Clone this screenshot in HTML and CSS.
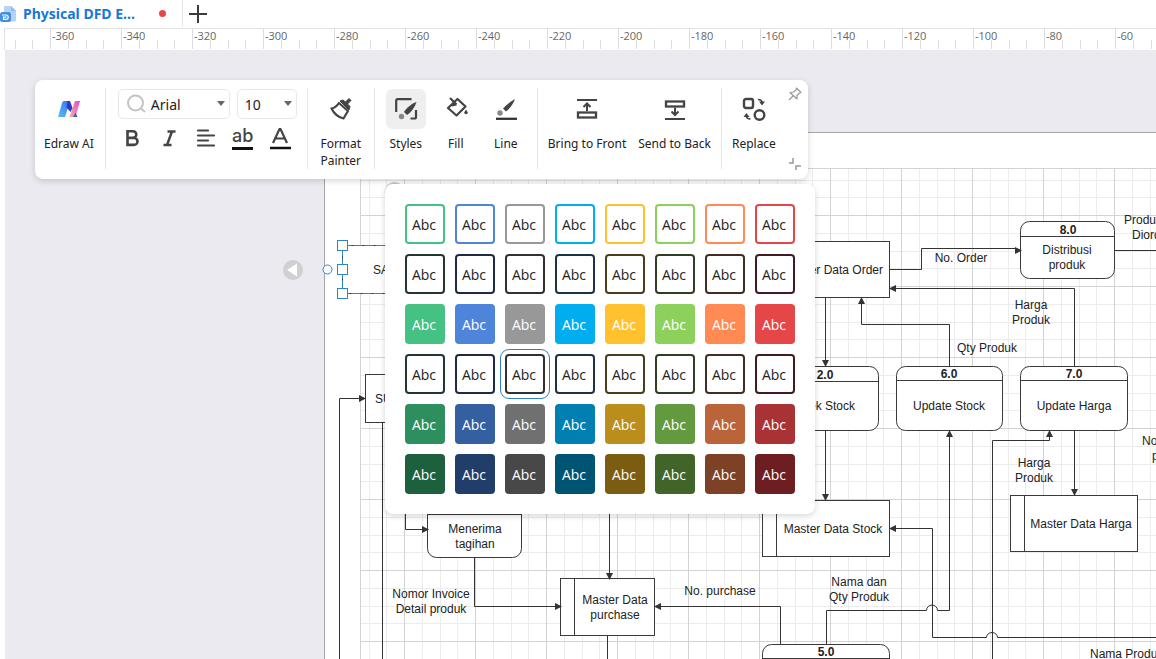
FILE: index.html
```html
<!DOCTYPE html>
<html lang="en">
<head>
<meta charset="utf-8">
<meta name="viewport" content="width=device-width, initial-scale=1">
<title>Physical DFD</title>
<link rel="stylesheet" href="styles.css">
</head>
<body>
<div class="app">
  <header class="tabs">
    <button class="tab" type="button">
      <svg class="tab-icon" width="16" height="18" viewBox="0 0 16 18" aria-hidden="true">
        <path d="M4 1h7l5 5v9a1.500 1.500 0 0 1-1.500 1.500H4z" fill="#b5d3f8"/>
        <path d="M11 1l5 5h-5z" fill="#8fbcf2"/>
        <rect x="0" y="7" width="11" height="10" rx="2.500" fill="#3f8fe6"/>
        <path d="M2 10h4a2.200 2.200 0 0 1 0 4.400H3.500v-2.200h3" fill="none" stroke="#fff" stroke-width="1.200"/>
      </svg>
      <span class="tab-title">Physical DFD E...</span>
      <span class="unsaved"></span>
    </button>
    <button class="add-tab" type="button" aria-label="New tab">
      <svg width="18" height="18" viewBox="0 0 18 18"><path d="M9 0v18M0 9h18" stroke="#3a3a3a" stroke-width="2"/></svg>
    </button>
  </header>

  <div class="ruler">
    <span class="mark">-360</span><span class="mark">-340</span><span class="mark">-320</span><span class="mark">-300</span>
    <span class="mark">-280</span><span class="mark">-260</span><span class="mark">-240</span><span class="mark">-220</span>
    <span class="mark">-200</span><span class="mark">-180</span><span class="mark">-160</span><span class="mark">-140</span>
    <span class="mark">-120</span><span class="mark">-100</span><span class="mark">-80</span><span class="mark">-60</span>
  </div>

  <main class="workspace">
    <svg class="diagram" width="100%" height="100%" aria-label="Data flow diagram">
      <defs>
        <pattern id="grid" x="49" y="2" width="71" height="71" patternUnits="userSpaceOnUse">
          <path d="M18.500 0v71M36.500 0v71M53.500 0v71M0 18.500h71M0 36.500h71M0 53.500h71" stroke="#ececec" fill="none"/>
          <path d="M.5 0v71M0 .5h71" stroke="#d3d3d3" fill="none"/>
        </pattern>
        <marker id="arrow" viewBox="0 0 7 8" refX="6" refY="4" markerWidth="7" markerHeight="8" markerUnits="userSpaceOnUse" orient="auto">
          <path d="M0 0.500L7 4L0 7.500z" fill="#333"/>
        </marker>
      </defs>
      <g transform="translate(-5 -50)">
        <rect class="page" x="324.500" y="132.500" width="2000" height="2000"/>
        <svg x="360" y="168" width="2000" height="2000" viewBox="360 168 2000 2000">
          <rect x="360" y="168" width="2000" height="2000" fill="url(#grid)"/>
          <path d="M360.500 168v2000M360 168.500h2000" stroke="#d3d3d3"/>
        </svg>
        <circle class="rotate" cx="394.500" cy="192" r="9"/>

        <g class="shape">
          <rect x="342.500" y="245.500" width="106" height="48"/>
          <rect x="365.500" y="374.500" width="80" height="48"/>
          <rect x="427.500" y="490.500" width="94" height="67" rx="9"/>
          <path d="M427 514.500h94"/>
          <rect x="560.500" y="578.500" width="94" height="57"/>
          <path d="M574.500 578v57"/>
          <rect x="762.500" y="644.500" width="127" height="64" rx="9"/>
          <path d="M762 658.500h127"/>
          <rect x="762.500" y="500.500" width="127" height="56"/>
          <path d="M776.500 500v56"/>
          <rect x="762.500" y="241.500" width="127" height="56"/>
          <rect x="772.500" y="366.500" width="106" height="64" rx="9"/>
          <path d="M772 381.500h106"/>
          <rect x="896.500" y="366.500" width="106" height="64" rx="9"/>
          <path d="M896 380.500h106"/>
          <rect x="1020.500" y="366.500" width="107" height="64" rx="9"/>
          <path d="M1020 380.500h107"/>
          <rect x="1020.500" y="221.500" width="94" height="57" rx="9"/>
          <path d="M1020 236.500h94"/>
          <rect x="1010.500" y="495.500" width="127" height="56"/>
          <path d="M1024.500 495v56"/>
        </g>

        <g class="link">
          <path d="M382.500 423v400"/>
          <path d="M607.500 636v200"/>
          <path d="M1115 250.500h400"/>
          <path d="M932.500 610v27.500h54a5.500 5 0 0 1 11 0h600"/>
        </g>
        <g class="link arrowed">
          <path d="M339.500 823V398.500H365"/>
          <path d="M405.500 500v29.500H428"/>
          <path d="M474.500 558v48.500H561"/>
          <path d="M609.500 500v79"/>
          <path d="M780.500 644v-37.500H655"/>
          <path d="M825.500 298v68"/>
          <path d="M825.500 431v69"/>
          <path d="M890 269.500h31.500v-21H1016.500V250.500H1021"/>
          <path d="M1074.500 366v-77.500H890"/>
          <path d="M949.500 366v-41.500h-88V298"/>
          <path d="M826.500 644v-33.500h100a5.500 5.500 0 0 1 11 0h12V431"/>
          <path d="M932.500 610v-81.500H890"/>
          <path d="M992.500 823V440.500h57V431"/>
          <path d="M1074.500 431v64"/>
        </g>

        <g class="label">
          <text x="373" y="274">SALES</text>
          <text x="375" y="403">SUPPLIER</text>
          <text x="1124" y="224">Produk</text>
          <text x="1132" y="239">Diorder</text>
          <text x="1142" y="445">Nota</text>
          <text x="1152" y="460">produk</text>
          <text x="1090" y="658">Nama Produk</text>
        </g>
        <g class="label end">
          <text x="883" y="274">Master Data Order</text>
          <text x="855" y="410">Cek Stock</text>
        </g>
        <g class="label middle">
          <text x="475" y="533">Menerima</text>
          <text x="475" y="548">tagihan</text>
          <text x="431" y="598">Nomor Invoice</text>
          <text x="431" y="613">Detail produk</text>
          <text x="615" y="604">Master Data</text>
          <text x="615" y="619">purchase</text>
          <text x="720" y="595">No. purchase</text>
          <text x="833" y="533">Master Data Stock</text>
          <text x="859" y="586">Nama dan</text>
          <text x="859" y="601">Qty Produk</text>
          <text x="961" y="262">No. Order</text>
          <text x="1031" y="309">Harga</text>
          <text x="1031" y="324">Produk</text>
          <text x="987" y="352">Qty Produk</text>
          <text x="1067" y="254">Distribusi</text>
          <text x="1067" y="269">produk</text>
          <text x="949" y="410">Update Stock</text>
          <text x="1074" y="410">Update Harga</text>
          <text x="1034" y="467">Harga</text>
          <text x="1034" y="482">Produk</text>
          <text x="1081" y="528">Master Data Harga</text>
        </g>
        <g class="label middle number">
          <text x="1068" y="234">8.0</text>
          <text x="825" y="379">2.0</text>
          <text x="949" y="378">6.0</text>
          <text x="1074" y="378">7.0</text>
          <text x="826" y="656">5.0</text>
        </g>

        <g class="selection">
          <rect class="outline" x="342.500" y="245.500" width="106" height="48"/>
          <rect x="337.500" y="240.500" width="10" height="10"/>
          <rect x="337.500" y="264.500" width="10" height="10"/>
          <rect x="337.500" y="288.500" width="10" height="10"/>
          <circle cx="327.500" cy="269.500" r="4.500"/>
        </g>
        <circle cx="293" cy="270" r="10" fill="#d0d0d0"/>
        <path d="M287 270l10-6.500v13z" fill="#fff"/>
      </g>
    </svg>
  </main>

  <section class="toolbar" aria-label="Format toolbar">
    <div class="group ai">
      <button class="tool" type="button">
        <span class="tool-icon">
          <svg width="24" height="18" viewBox="0 0 24 18">
            <defs>
              <linearGradient id="blue" x1="0" y1="1" x2="1" y2="0"><stop offset="0" stop-color="#56c1f5"/><stop offset="1" stop-color="#3e6df0"/></linearGradient>
              <linearGradient id="pink" x1="0" y1="1" x2="1" y2="0"><stop offset="0" stop-color="#ffa9a8"/><stop offset="1" stop-color="#e64bc8"/></linearGradient>
            </defs>
            <path d="M7 1h6l-5 16H1L5 3q.6-2 2-2z" fill="url(#blue)"/>
            <path d="M18 1h5l-4.500 16h-6z" fill="url(#pink)"/>
            <path d="M10.500 1h2.500l2.500 7-2 4-4-4.500z" fill="#2b3bc4"/>
            <path d="M18.500 12.500l2 4.500h-4.500z" fill="#3f62b8"/>
          </svg>
        </span>
        <span>Edraw AI</span>
      </button>
    </div>

    <div class="group text-group">
      <div class="row fields">
        <label class="field font-field">
          <svg width="20" height="20" viewBox="0 0 20 20" aria-hidden="true"><circle cx="9.500" cy="9" r="7.500" fill="none" stroke="#c4c4c4" stroke-width="2"/><path d="M15 14.500l4 3.500" stroke="#c4c4c4" stroke-width="2"/></svg>
          <select aria-label="Font"><option>Arial</option></select>
          <span class="caret"></span>
        </label>
        <label class="field size-field">
          <select aria-label="Font size"><option>10</option></select>
          <span class="caret"></span>
        </label>
      </div>
      <div class="row styles-row">
        <button class="mini" type="button" aria-label="Bold"><svg width="24" height="24" viewBox="0 0 24 24" fill="none" stroke="#444" stroke-width="2.600"><path d="M7.500 5.300h5.500a3.300 3.300 0 0 1 0 6.600H7.500zM7.500 11.900h6.500a3.500 3.500 0 0 1 0 7H7.500z"/></svg></button>
        <button class="mini" type="button" aria-label="Italic"><svg width="24" height="24" viewBox="0 0 24 24" fill="none" stroke="#444" stroke-width="2.400"><path d="M10.500 5.500h8M6.500 19h8M15 5.500L10 19"/></svg></button>
        <button class="mini" type="button" aria-label="Align"><svg width="24" height="24" viewBox="0 0 24 24" stroke="#444" stroke-width="2.200" stroke-linecap="round"><path d="M4 4.500h10M4 9.500h16M4 14.500h10M4 19.500h16"/></svg></button>
        <button class="mini" type="button" aria-label="Highlight"><span class="glyph">ab</span></button>
        <button class="mini" type="button" aria-label="Font color"><svg width="24" height="24" viewBox="0 0 24 24" fill="none" stroke="#444" stroke-width="2.200"><path d="M5 17L11.500 3h1L19 17M7.500 12.500h9"/><path d="M2 22h21" stroke="#111" stroke-width="2.500"/></svg></button>
      </div>
    </div>

    <div class="group painter">
      <button class="tool" type="button">
        <span class="tool-icon">
          <svg width="24" height="24" viewBox="0 0 24 24" fill="none" stroke="#444" stroke-width="2.200" stroke-linejoin="round">
            <path d="M2.500 11.500Q7 10.500 10 6l9 8q-2.500 4-4.500 7.500Q6.500 19.500 2.500 11.500z"/>
            <path d="M11 4l9 9 1-3.500-2.500-2.500 3.500-3.500-2-2-3.500 3.500-2.500-2z" fill="#444" stroke-width="1"/>
          </svg>
        </span>
        <span>Format Painter</span>
      </button>
    </div>

    <div class="group paint-group">
      <button class="tool active" type="button" aria-pressed="true">
        <span class="tool-icon">
          <svg width="24" height="24" viewBox="0 0 24 24" fill="none" stroke="#444" stroke-width="2.200">
            <path d="M17.500 2.200H3.500a1.300 1.300 0 0 0-1.300 1.300v11.500M22 13v7a1.500 1.500 0 0 1-1.500 1.500H16.500"/>
            <path d="M22.500 5c-1.500 5-5 10-9.500 13l-3-3c3-4.500 7.500-8.500 12.500-10z" fill="#444" stroke="none"/>
            <circle cx="7.500" cy="19.500" r="2.700" fill="#888" stroke="none"/>
          </svg>
        </span>
        <span>Styles</span>
      </button>
      <button class="tool" type="button">
        <span class="tool-icon">
          <svg width="24" height="24" viewBox="0 0 24 24" fill="none" stroke="#444" stroke-width="2.200" stroke-linejoin="round">
            <path d="M13.500 2L21.500 9.500 12.500 18.500 4 11z"/>
            <path d="M6 1l6.500 6.500M7.500 8.500l5-1"/>
            <path d="M22 12.500l1.800 3a1.800 1.800 0 1 1-3.600 0z" fill="#444" stroke="none"/>
          </svg>
        </span>
        <span>Fill</span>
      </button>
      <button class="tool" type="button">
        <span class="tool-icon">
          <svg width="24" height="24" viewBox="0 0 24 24">
            <path d="M21 2c-1.500 4.500-4.500 9-9 12.500l-3-3C12.500 7.500 16.500 4.500 21 2z" fill="#444"/>
            <circle cx="6" cy="16" r="2.700" fill="#888"/>
            <path d="M2 21.800h21" stroke="#333" stroke-width="2.300"/>
          </svg>
        </span>
        <span>Line</span>
      </button>
    </div>

    <div class="group layer-group">
      <button class="tool" type="button">
        <span class="tool-icon">
          <svg width="24" height="24" viewBox="0 0 24 24" fill="none" stroke="#444" stroke-width="2">
            <path d="M2 3h20M12 14V7M8.500 10L12 6.500l3.500 3.500"/><rect x="3" y="15.500" width="18" height="5" stroke-width="2.300"/>
          </svg>
        </span>
        <span>Bring to Front</span>
      </button>
      <button class="tool" type="button">
        <span class="tool-icon">
          <svg width="24" height="24" viewBox="0 0 24 24" fill="none" stroke="#444" stroke-width="2">
            <path d="M2 22h20M12 10.500v7M8.500 14.500L12 18l3.500-3.500"/><rect x="3" y="4.500" width="18" height="5" stroke-width="2.300"/>
          </svg>
        </span>
        <span>Send to Back</span>
      </button>
    </div>

    <div class="group replace-group">
      <button class="tool" type="button">
        <span class="tool-icon">
          <svg width="24" height="24" viewBox="0 0 24 24" fill="none" stroke="#444" stroke-width="2.400">
            <rect x="2" y="2" width="9" height="9" rx="2"/>
            <circle cx="17.500" cy="18" r="4.800"/>
            <path d="M16 2.500c3 0 4 1 4 3M8.500 22c-3 0-4-1-4-3" stroke-width="1.600"/>
            <path d="M17 4.500h6L20 8.500zM1.500 20h6L4.500 16z" fill="#444" stroke="none"/>
          </svg>
        </span>
        <span>Replace</span>
      </button>
      <div class="corner">
        <button class="corner-btn" type="button" aria-label="Pin"><svg width="14" height="14" viewBox="0 0 14 14" fill="none" stroke="#999" stroke-width="1.200" stroke-linejoin="round"><path d="M8.500 1L13 5.500l-1.500.500-2.500 2.500V12L2 5.500 5.500 5 8 3zM5 9L1 13"/></svg></button>
        <button class="corner-btn" type="button" aria-label="Collapse"><svg width="14" height="14" viewBox="0 0 14 14" fill="none" stroke="#999" stroke-width="1.500"><path d="M1 6h4V1M8 13V9h5"/></svg></button>
      </div>
    </div>
  </section>

  <section class="palette" aria-label="Quick styles">
    <div class="swatches outline-light">
      <button class="swatch green">Abc</button><button class="swatch blue">Abc</button><button class="swatch gray">Abc</button><button class="swatch sky">Abc</button>
      <button class="swatch gold">Abc</button><button class="swatch lime">Abc</button><button class="swatch orange">Abc</button><button class="swatch red">Abc</button>
    </div>
    <div class="swatches outline-ink">
      <button class="swatch green">Abc</button><button class="swatch blue">Abc</button><button class="swatch gray">Abc</button><button class="swatch sky">Abc</button>
      <button class="swatch gold">Abc</button><button class="swatch lime">Abc</button><button class="swatch orange">Abc</button><button class="swatch red">Abc</button>
    </div>
    <div class="swatches solid-light">
      <button class="swatch green">Abc</button><button class="swatch blue">Abc</button><button class="swatch gray">Abc</button><button class="swatch sky">Abc</button>
      <button class="swatch gold">Abc</button><button class="swatch lime">Abc</button><button class="swatch orange">Abc</button><button class="swatch red">Abc</button>
    </div>
    <div class="swatches outline-ink">
      <button class="swatch green">Abc</button><button class="swatch blue">Abc</button><button class="swatch gray selected">Abc</button><button class="swatch sky">Abc</button>
      <button class="swatch gold">Abc</button><button class="swatch lime">Abc</button><button class="swatch orange">Abc</button><button class="swatch red">Abc</button>
    </div>
    <div class="swatches solid-mid">
      <button class="swatch green">Abc</button><button class="swatch blue">Abc</button><button class="swatch gray">Abc</button><button class="swatch sky">Abc</button>
      <button class="swatch gold">Abc</button><button class="swatch lime">Abc</button><button class="swatch orange">Abc</button><button class="swatch red">Abc</button>
    </div>
    <div class="swatches solid-dark">
      <button class="swatch green">Abc</button><button class="swatch blue">Abc</button><button class="swatch gray">Abc</button><button class="swatch sky">Abc</button>
      <button class="swatch gold">Abc</button><button class="swatch lime">Abc</button><button class="swatch orange">Abc</button><button class="swatch red">Abc</button>
    </div>
  </section>
</div>
</body>
</html>
```
FILE: styles.css
```css
* { box-sizing: border-box; }

body {
  margin: 0;
  font-family: "Noto Sans", "Open Sans", sans-serif;
  font-size: 12px;
  color: #222;
}

button, select {
  margin: 0;
  padding: 0;
  border: 0;
  background: none;
  font: inherit;
  color: inherit;
}

.app {
  position: relative;
  display: flex;
  flex-direction: column;
  height: 100vh;
  overflow: hidden;
  background: #fff;
}

/* Document tabs */
.tabs {
  display: flex;
  align-items: stretch;
  height: 28px;
  padding-bottom: 1px;
}
.tab {
  display: flex;
  align-items: center;
  width: 183px;
  border-right: 1px solid #e8e8ea;
}
.tab-icon { margin-right: 7px; }
.tab-title {
  width: 136px;
  text-align: left;
  font-size: 14px;
  font-weight: 700;
  color: #1677dc;
}
.unsaved {
  width: 7px;
  height: 7px;
  border-radius: 50%;
  background: #e8454a;
}
.add-tab {
  display: flex;
  align-items: center;
  padding-left: 6px;
}

/* Ruler */
.ruler {
  display: flex;
  flex: none;
  height: 22px;
  margin-left: 4px;
  padding-left: 45px;
  overflow: hidden;
  border-top: 1px solid #e2e2e5;
  border-left: 1px solid #e2e2e5;
  background: repeating-linear-gradient(90deg, #dcdcdf 0 1px, transparent 1px 18px, #dcdcdf 18px 19px, transparent 19px 36px, #dcdcdf 36px 37px, transparent 37px 53px, #dcdcdf 53px 54px, transparent 54px 71px) -26px 11px no-repeat;
  background-size: 120% 9px;
}
.mark {
  flex: none;
  width: 71px;
  height: 20px;
  padding-left: 1px;
  border-left: 1px solid #dcdcdf;
  font-family: "Open Sans", "Noto Sans", sans-serif;
  font-size: 11px;
  line-height: 14px;
  color: #666;
}

/* Canvas */
.workspace {
  flex: 1;
  min-height: 0;
  margin-left: 5px;
  background: #eaeaf0;
}
.diagram { display: block; }
.page { fill: #fff; stroke: #a5a5ab; }
.rotate { fill: #fff; stroke: #ccc; stroke-width: 2; }
.shape { fill: #fff; stroke: #3a3a3a; }
.link { fill: none; stroke: #333; }
.arrowed path { marker-end: url(#arrow); }
.label {
  font-family: "Liberation Sans", Arial, sans-serif;
  font-size: 12px;
  fill: #222;
}
.middle { text-anchor: middle; }
.end { text-anchor: end; }
.number { font-weight: 700; }
.selection { fill: #fff; stroke: #2f86c0; }
.selection .outline { fill: none; stroke-dasharray: 9 2; }

/* Floating format toolbar */
.toolbar {
  position: absolute;
  top: 80px;
  left: 35px;
  display: flex;
  padding: 8px 0 10px;
  border-radius: 8px;
  background: #fff;
  box-shadow: 0 2px 6px rgba(0, 0, 0, 0.16);
}
.group {
  display: flex;
  align-items: flex-start;
  min-height: 81px;
  padding: 1px 10px 0;
  border-right: 1px solid #e6e6e8;
}
.ai { padding: 1px 11px 0 9px; }
.text-group {
  flex-direction: column;
  gap: 7px;
  padding: 1px 10px 0 12px;
}
.painter { padding: 1px 8px 0; }
.paint-group { padding: 1px 6px 0; }
.layer-group { gap: 12px; }
.replace-group { padding-right: 6px; border-right: 0; }

.tool {
  display: flex;
  flex-direction: column;
  align-items: center;
  gap: 6px;
  line-height: 17px;
}
.painter .tool, .paint-group .tool { width: 50px; }
.tool-icon {
  display: flex;
  align-items: center;
  justify-content: center;
  width: 40px;
  height: 40px;
  border-radius: 6px;
}
.active .tool-icon { background: #efeff0; }

.row { display: flex; }
.fields { gap: 7px; }
.styles-row { gap: 9px; }
.field {
  display: flex;
  align-items: center;
  height: 30px;
  padding: 0 4px 0 7px;
  border: 1px solid #e8e8ea;
  border-radius: 5px;
}
.font-field { width: 112px; }
.size-field { width: 60px; }
.field select {
  flex: 1;
  min-width: 0;
  margin-left: 5px;
  appearance: none;
  font-size: 14px;
  outline: 0;
}
.size-field select { margin-left: 0; }
.caret {
  margin-bottom: 2px;
  border: 4px solid transparent;
  border-top: 5px solid #666;
  border-bottom: 0;
}
.mini {
  display: flex;
  justify-content: center;
  width: 28px;
  height: 24px;
}
.glyph {
  border-bottom: 3px solid #111;
  font-family: Inter, sans-serif;
  font-size: 18px;
  font-weight: 500;
  line-height: 20px;
  color: #444;
}
.corner {
  display: flex;
  flex-direction: column;
  justify-content: space-between;
  align-self: stretch;
  margin: -2px 0 -2px 12px;
}
.corner-btn { display: flex; }

/* Quick style palette */
.palette {
  position: absolute;
  top: 184px;
  left: 385px;
  display: flex;
  flex-direction: column;
  gap: 10px;
  padding: 20px;
  border-radius: 8px;
  background: #fff;
  box-shadow: 0 2px 6px rgba(0, 0, 0, 0.16);
}
.swatches { display: flex; gap: 10px; }
.swatch {
  width: 40px;
  height: 40px;
  padding: 2px 2px 0 0;
  border: 2px solid transparent;
  border-radius: 4px;
  font-family: "Open Sans", "Noto Sans", sans-serif;
  font-size: 14px;
  line-height: 20px;
}
.green { --light: #45c184; --mid: #2e8f5e; --dark: #1d603e; --ink: #20382e; }
.blue { --light: #4e84d9; --mid: #345fa0; --dark: #213d69; --ink: #1f2a44; }
.gray { --light: #989898; --mid: #707070; --dark: #484848; --ink: #35302f; }
.sky { --light: #00aeef; --mid: #007fb2; --dark: #005473; --ink: #1b3344; }
.gold { --light: #ffc22e; --mid: #ba8d1c; --dark: #7b5c10; --ink: #4b3c1c; }
.lime { --light: #8dd15c; --mid: #63993f; --dark: #416528; --ink: #2f3f22; }
.orange { --light: #ff8a54; --mid: #bb643a; --dark: #7d4226; --ink: #432c22; }
.red { --light: #e54749; --mid: #a83234; --dark: #6e1d20; --ink: #401c20; }

.outline-light .swatch { border-color: var(--light); }
.outline-ink .swatch { border-color: var(--ink); }
.solid-light .swatch { background: var(--light); color: #fff; border: 0; }
.solid-mid .swatch { background: var(--mid); color: #fff; border: 0; }
.solid-dark .swatch { background: var(--dark); color: #fff; border: 0; }
.selected {
  outline: 1px solid #2f7fc4;
  outline-offset: 4px;
}
```
